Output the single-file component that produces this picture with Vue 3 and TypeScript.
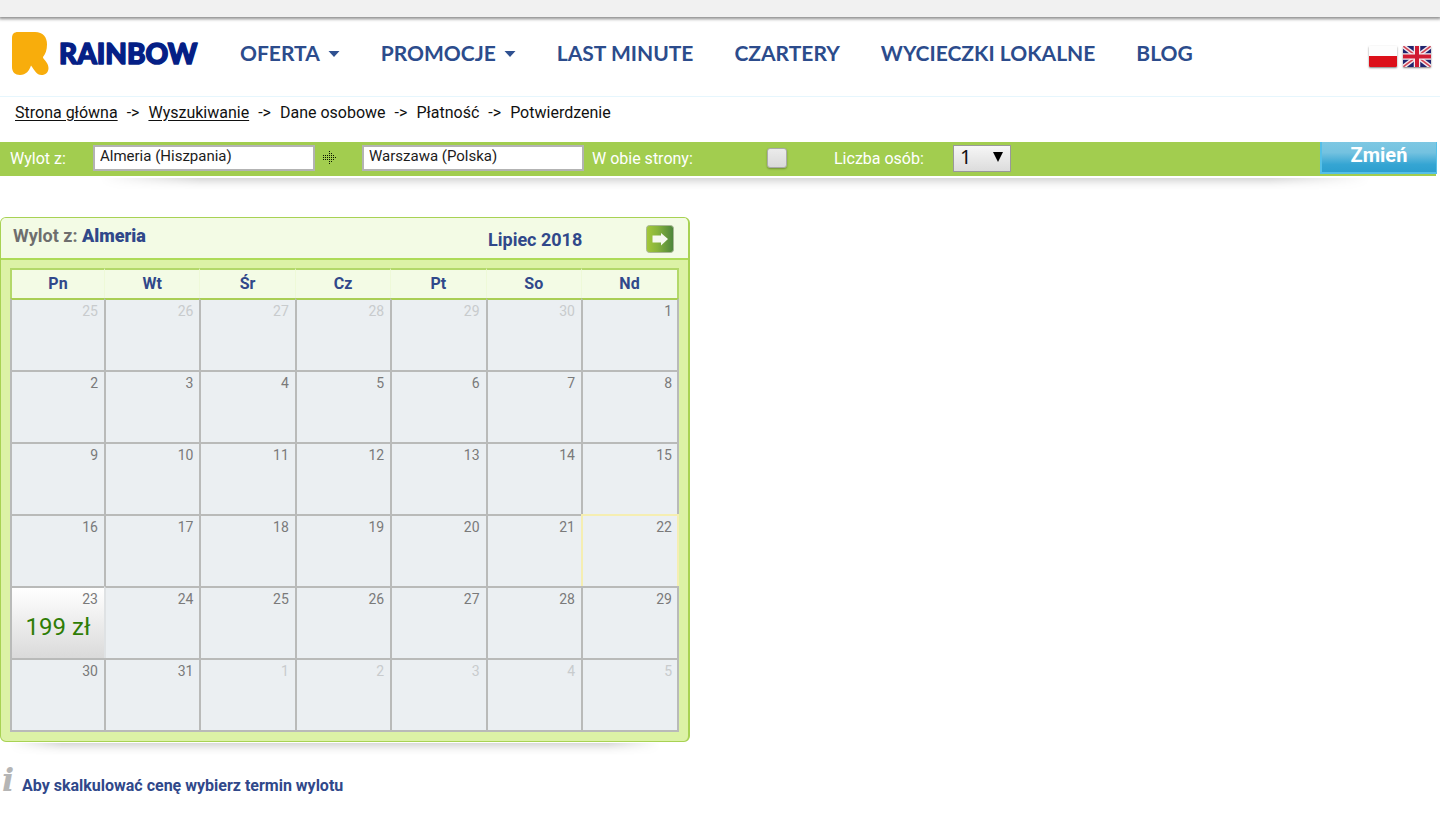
<script setup lang="ts">
import { ref } from 'vue'

interface NavItem {
  label: string
  menu?: boolean
}

interface Day {
  day: number
  other?: boolean
  today?: boolean
  price?: string
}

const nav: NavItem[] = [
  { label: 'OFERTA', menu: true },
  { label: 'PROMOCJE', menu: true },
  { label: 'LAST MINUTE' },
  { label: 'CZARTERY' },
  { label: 'WYCIECZKI LOKALNE' },
  { label: 'BLOG' },
]

const steps = [
  { label: 'Strona główna', link: true },
  { label: 'Wyszukiwanie', link: true },
  { label: 'Dane osobowe', link: false },
  { label: 'Płatność', link: false },
  { label: 'Potwierdzenie', link: false },
]

const weekdays = ['Pn', 'Wt', 'Śr', 'Cz', 'Pt', 'So', 'Nd']

function buildWeeks(): Day[][] {
  const days: Day[] = []
  for (let d = 25; d <= 30; d++) days.push({ day: d, other: true })
  for (let d = 1; d <= 31; d++) {
    days.push({ day: d, today: d === 22, price: d === 23 ? '199 zł' : undefined })
  }
  for (let d = 1; d <= 5; d++) days.push({ day: d, other: true })
  const weeks: Day[][] = []
  for (let i = 0; i < days.length; i += 7) weeks.push(days.slice(i, i + 7))
  return weeks
}

const weeks = buildWeeks()
const from = ref('Almeria (Hiszpania)')
const to = ref('Warszawa (Polska)')
const bothWays = ref(false)
const people = ref('1')

const dotRows = [
  { y: 0, xs: [6] },
  { y: 2, xs: [6, 8] },
  { y: 4, xs: [0, 2, 4, 6, 8, 10] },
  { y: 6, xs: [0, 2, 4, 6, 8, 10, 12] },
  { y: 8, xs: [0, 2, 4, 6, 8, 10] },
  { y: 10, xs: [6, 8] },
  { y: 12, xs: [6] },
]
</script>

<template>
  <div class="page">
    <div class="strip"></div>

    <header class="header">
      <a class="logo" href="#" aria-label="Rainbow">
        <svg viewBox="0 0 190 46" width="190" height="46" aria-hidden="true">
          <path
            d="M7 1 H24 C32 1 36 6 36 13.500 C36 19 34.500 23 32 26 C31.500 28 37.500 31 37.500 37 C37.500 41.500 34.500 44 30.500 44 C25.500 44 23.500 39 20 34.500 C18.500 39.500 15 44 9 44 C4 44 1 41 1 36 V7 C1 3 3 1 7 1 Z"
            fill="#f8ad0c"
          />
          <text class="logo-text" x="48" y="33">RAINBOW</text>
        </svg>
      </a>
      <nav class="nav">
        <a v-for="item in nav" :key="item.label" href="#">
          {{ item.label }}
          <svg v-if="item.menu" class="caret" viewBox="0 0 12 6" width="12" height="6" aria-hidden="true">
            <path d="M0.500 0 H11.500 L6 6 Z" fill="#2f5191" />
          </svg>
        </a>
      </nav>
      <div class="langs">
        <a href="#" aria-label="Polski">
          <svg viewBox="0 0 28 21" width="28" height="21" aria-hidden="true">
            <rect width="28" height="21" fill="#fdfdfd" />
            <rect y="10" width="28" height="11" fill="#dc0f19" />
          </svg>
        </a>
        <a href="#" aria-label="English">
          <svg viewBox="0 0 28 21" width="28" height="21" aria-hidden="true">
            <rect width="28" height="21" fill="#20246f" />
            <path d="M0 0 L28 21 M28 0 L0 21" stroke="#f3e9ee" stroke-width="4.500" />
            <path d="M0 0 L28 21 M28 0 L0 21" stroke="#d34656" stroke-width="1.600" />
            <path d="M14 0 V21 M0 10.500 H28" stroke="#f6eef2" stroke-width="6.500" />
            <path d="M14 0 V21 M0 10.500 H28" stroke="#d01c33" stroke-width="4" />
          </svg>
        </a>
      </div>
    </header>

    <div class="crumbs">
      <template v-for="(step, i) in steps" :key="step.label">
        <span v-if="i > 0">-&gt;</span>
        <a v-if="step.link" href="#">{{ step.label }}</a>
        <span v-else>{{ step.label }}</span>
      </template>
    </div>

    <form class="search" @submit.prevent>
      <label class="lbl-from" for="from">Wylot z:</label>
      <input id="from" v-model="from" class="field" type="text" />
      <svg class="dots" viewBox="0 0 14 14" width="14" height="14" aria-hidden="true">
        <template v-for="row in dotRows" :key="row.y">
          <rect v-for="x in row.xs" :key="x" :x="x" :y="row.y" width="1" height="1" fill="#0c1600" />
        </template>
      </svg>
      <input id="to" v-model="to" class="field" type="text" aria-label="Przylot do" />
      <label class="lbl-both" for="both">W obie strony:</label>
      <input id="both" v-model="bothWays" class="check" type="checkbox" />
      <label class="lbl-people" for="people">Liczba osób:</label>
      <span class="select-box">
        <select id="people" v-model="people">
          <option v-for="n in 9" :key="n" :value="String(n)">{{ n }}</option>
        </select>
        <svg class="select-arrow" viewBox="0 0 10 10" width="10" height="10" aria-hidden="true">
          <path d="M0 0 H10 L5 10 Z" fill="#000" />
        </svg>
      </span>
      <button class="change" type="submit">Zmień</button>
    </form>
    <div class="shade"></div>

    <section class="calendar">
      <div class="cal-head">
        <h2>Wylot z: <strong>Almeria</strong></h2>
        <div class="month">Lipiec 2018</div>
        <button class="next" type="button" aria-label="Następny miesiąc">
          <svg viewBox="0 0 28 28" width="28" height="28" aria-hidden="true">
            <defs>
              <linearGradient id="nextFill" x1="0" y1="0" x2="1" y2="0">
                <stop offset="0" stop-color="#a4c83a" />
                <stop offset="0.400" stop-color="#88b43c" />
                <stop offset="1" stop-color="#4c843c" />
              </linearGradient>
            </defs>
            <rect x="0.500" y="0.500" width="27" height="27" rx="3" fill="url(#nextFill)" stroke="#a9b896" />
            <path d="M6.500 10.500 H15 V8 L22 14 L15 20.500 V17.500 H6.500 Z" fill="#f6f9f0" />
          </svg>
        </button>
      </div>
      <div class="cal-body">
        <table>
          <colgroup>
            <col class="col-first" />
            <col span="5" />
            <col class="col-last" />
          </colgroup>
          <thead>
            <tr>
              <th v-for="name in weekdays" :key="name" scope="col">{{ name }}</th>
            </tr>
          </thead>
          <tbody>
            <tr v-for="(week, w) in weeks" :key="w">
              <td
                v-for="(cell, c) in week"
                :key="c"
                :class="{ other: cell.other, today: cell.today, offer: cell.price }"
              >
                <div class="num">{{ cell.day }}</div>
                <div v-if="cell.price" class="price">{{ cell.price }}</div>
              </td>
            </tr>
          </tbody>
        </table>
      </div>
    </section>
    <div class="shade cal-shade"></div>

    <p class="hint">
      <i class="info" aria-hidden="true">i</i>
      <span>Aby skalkulować cenę wybierz termin wylotu</span>
    </p>
  </div>
</template>

<style>
body {
  margin: 0;
  background: #fff;
}
</style>

<style scoped>
* {
  box-sizing: border-box;
}

.page {
  font-family: Roboto, 'Liberation Sans', sans-serif;
  font-size: 16px;
  color: #111;
}

.strip {
  height: 17px;
  background: #f1f1f1;
  box-shadow: 0 1px 3px 1px rgba(0, 0, 0, 0.45);
}

.header {
  display: flex;
  align-items: center;
  height: 80px;
  padding: 0 9px 6px 11px;
  border-bottom: 1px solid #e6f6fd;
}

.logo {
  width: 229px;
}

.logo svg {
  display: block;
}

.logo-text {
  font: 900 28px Lato, sans-serif;
  fill: #051f86;
  stroke: #051f86;
  stroke-width: 1.5px;
  stroke-linejoin: round;
}

.nav {
  display: flex;
  flex: 1;
  gap: 41px;
  padding-bottom: 2px;
}

.nav a {
  display: flex;
  align-items: center;
  gap: 8px;
  font: 700 21px/28px Lato, sans-serif;
  color: #2c4c8c;
  text-decoration: none;
  white-space: nowrap;
}

.caret {
  margin-top: 3px;
}

.langs {
  display: flex;
  gap: 6px;
  padding-top: 6px;
}

.langs svg {
  display: block;
  border-radius: 1px;
  box-shadow: 0 1px 2px rgba(0, 0, 0, 0.5);
}

.crumbs {
  display: flex;
  gap: 9px;
  padding: 6px 15px 4px;
  line-height: 20px;
  white-space: nowrap;
}

.crumbs a {
  color: #111;
  text-underline-offset: 2px;
}

.search {
  display: flex;
  align-items: center;
  height: 34px;
  margin: 15px 4px 0 0;
  padding: 0 0 2px 10px;
  background: #a2cd4f;
  color: #fff;
}

.search label {
  white-space: nowrap;
}

.lbl-from {
  width: 83px;
}

.field {
  width: 222px;
  height: 26px;
  padding: 0 5px 4px;
  border: 2px solid #b3b3b3;
  border-radius: 0;
  background: #fff;
  color: #1c1c1c;
  font: 15px/20px Roboto, sans-serif;
}

.dots {
  margin: 0 25px 0 8px;
}

.lbl-both {
  width: 175px;
  margin-left: 8px;
}

.check {
  appearance: none;
  width: 20px;
  height: 20px;
  margin: 0;
  border: 1px solid #aaa;
  border-radius: 3px;
  background: linear-gradient(#ebebeb, #dadada);
  box-shadow: 0 1px 2px rgba(0, 0, 0, 0.3);
}

.lbl-people {
  width: 119px;
  margin-left: 47px;
}

.select-box {
  position: relative;
  width: 58px;
  height: 27px;
}

.select-box select {
  appearance: none;
  display: block;
  width: 100%;
  height: 100%;
  padding: 0 6px 3px;
  border: 1px solid #999;
  border-radius: 0;
  background: linear-gradient(#f6f6f6, #dcdcdc);
  color: #111;
  font: 20px/22px 'Noto Sans', sans-serif;
}

.select-arrow {
  position: absolute;
  top: 7px;
  right: 8px;
  pointer-events: none;
}

.change {
  align-self: flex-start;
  width: 117px;
  height: 32px;
  margin: 0 -1px 0 auto;
  padding: 0 0 5px;
  border: solid #55bfe8;
  border-width: 0 1px 2px 2px;
  background: linear-gradient(#7ec8e3 0%, #74c2e0 35%, #35a5d3 75%, #2c9fcf 100%);
  color: #fff;
  font: 700 20px/24px Roboto, sans-serif;
}

.shade {
  height: 12px;
  margin: 2px 70px 0 100px;
  background: linear-gradient(rgba(0, 0, 0, 0.15), rgba(0, 0, 0, 0.03) 60%, transparent);
  mask-image: linear-gradient(90deg, transparent, #000 8%, #000 92%, transparent);
}

.calendar {
  width: 100%;
  max-width: 690px;
  margin-top: 27px;
  border: solid #a8d254;
  border-width: 1px 2px 1px 1px;
  border-radius: 6px;
  background: #dcf2a6;
  overflow: hidden;
}

.cal-head {
  display: flex;
  align-items: flex-start;
  height: 42px;
  padding: 0 14px 0 12px;
  border-bottom: 2px solid #addb57;
  background: #f3fbe5;
}

.cal-head h2 {
  flex: 1;
  margin: 6px 0 0;
  color: #6e6e6e;
  font-size: 18px;
  line-height: 24px;
}

.cal-head strong,
.month {
  color: #30488a;
}

.month {
  width: 158px;
  margin-top: 10px;
  font-size: 18px;
  font-weight: 700;
  line-height: 24px;
}

.next {
  margin-top: 7px;
  padding: 0;
  border: 0;
  background: none;
}

.next svg {
  display: block;
}

.cal-body {
  padding: 8px 9px 9px;
}

table {
  width: 100%;
  table-layout: fixed;
  border-spacing: 0;
  border-bottom: 2px solid #b9bab9;
}

.col-first {
  width: 94px;
}

.col-last {
  width: 98px;
}

th {
  height: 30px;
  padding: 0;
  border-top: 2px solid #b3d86a;
  border-left: 1px solid #eef9d8;
  background: #f3fbe5;
  color: #30488a;
  font-size: 16px;
  line-height: 20px;
}

th:first-child {
  border-left: 2px solid #b3d86a;
}

th:last-child {
  border-right: 2px solid #b3d86a;
}

td {
  height: 72px;
  padding: 1px 6px 0 0;
  border-top: 2px solid #b9bab9;
  border-left: 2px solid #b9bab9;
  background: #ebeff2;
  color: #7a7a7a;
  vertical-align: top;
}

tr:first-child td {
  border-top-color: #a9ce55;
}

tbody tr:not(:first-child) td {
  border-top-color: #b9bab9;
}

td:last-child {
  padding-right: 5px;
  border-right: 2px solid #b9bab9;
}

td.other {
  color: #c8cbcd;
}

tbody tr:not(:first-child) td.today {
  border-color: #f5eeb2;
}

td.offer {
  background: linear-gradient(#fff, #dadada);
}

td.offer + td {
  border-left-color: #dfe2e4;
}

.num {
  font-size: 14px;
  line-height: 20px;
  text-align: right;
}

.price {
  margin-right: -6px;
  color: #2f7d05;
  font-size: 24px;
  line-height: 36px;
  text-align: center;
}

.cal-shade {
  max-width: 650px;
  margin: 1px 0 0 10px;
}

.hint {
  display: flex;
  align-items: flex-start;
  gap: 7px;
  margin: 8px 0 0;
  padding-left: 2px;
  color: #30488a;
  font-weight: 700;
  line-height: 20px;
}

.hint span {
  padding-top: 13px;
}

.info {
  width: 13px;
  color: #b5b5b5;
  font: italic 700 32px/34px 'DejaVu Serif', serif;
}
</style>
